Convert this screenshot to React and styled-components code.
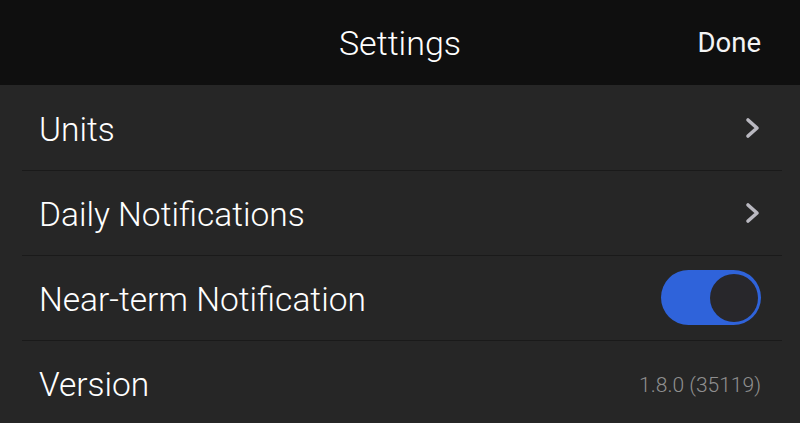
import styled, { createGlobalStyle } from 'styled-components';

const GlobalStyle = createGlobalStyle`
  html, body {
    margin: 0;
    padding: 0;
    background: #262626;
  }
  body {
    font-family: Roboto, "Liberation Sans", Arial, sans-serif;
    -webkit-font-smoothing: antialiased;
  }
`;

const Page = styled.div`
  width: 800px;
  height: 423px;
  overflow: hidden;
  background: #262626;
`;

const NavBar = styled.header`
  height: 85px;
  background: #0f0f0f;
  display: grid;
  grid-template-columns: 1fr auto 1fr;
  align-items: center;
  padding: 0 39px;
  box-sizing: border-box;
`;

const Title = styled.h1`
  grid-column: 2;
  margin: 0;
  font-size: 34px;
  font-weight: 300;
  color: #ffffff;
`;

const DoneButton = styled.button`
  grid-column: 3;
  justify-self: end;
  padding: 0;
  background: none;
  border: none;
  font-family: inherit;
  font-size: 27.5px;
  font-weight: 400;
  color: #f4f4f4;
  cursor: pointer;
`;

const List = styled.ul`
  list-style: none;
  margin: 0;
  padding: 0;
`;

const Row = styled.li`
  height: 85px;
  display: flex;
  align-items: center;
  justify-content: space-between;
  padding: 0 39px;
  box-sizing: border-box;
  position: relative;

  & + &::before {
    content: '';
    position: absolute;
    top: 0;
    left: 22px;
    right: 18px;
    height: 1px;
    background: #1a1a1a;
  }
`;

const Label = styled.span`
  padding-top: 4px;
  font-size: 33.5px;
  font-weight: 300;
  color: #ffffff;
`;

const Detail = styled.span`
  padding-top: 4px;
  font-size: 21px;
  font-weight: 300;
  color: #8f8f8f;
`;

const Chevron = styled.svg`
  width: 16px;
  height: 22px;
`;

const Toggle = styled.div`
  width: 100px;
  height: 55px;
  border-radius: 28px;
  background: #2f63da;
  display: flex;
  align-items: center;
  justify-content: ${p => (p.$on ? 'flex-end' : 'flex-start')};
  padding: 0 3px;
  box-sizing: border-box;
`;

const Knob = styled.div`
  width: 48px;
  height: 48px;
  border-radius: 50%;
  background: #28272b;
`;

function ChevronRight() {
  return (
    <Chevron viewBox="0 0 16 22">
      <path d="M3 3 L12 11 L3 19" fill="none" stroke="#b9b8c0" strokeWidth="3.6" strokeLinecap="round" strokeLinejoin="round" />
    </Chevron>
  );
}

export default function App() {
  return (
    <Page>
      <GlobalStyle />
      <NavBar>
        <Title>Settings</Title>
        <DoneButton>Done</DoneButton>
      </NavBar>
      <List>
        <Row>
          <Label>Units</Label>
          <ChevronRight />
        </Row>
        <Row>
          <Label>Daily Notifications</Label>
          <ChevronRight />
        </Row>
        <Row>
          <Label>Near-term Notification</Label>
          <Toggle $on>
            <Knob />
          </Toggle>
        </Row>
        <Row>
          <Label>Version</Label>
          <Detail>1.8.0 (35119)</Detail>
        </Row>
      </List>
    </Page>
  );
}
